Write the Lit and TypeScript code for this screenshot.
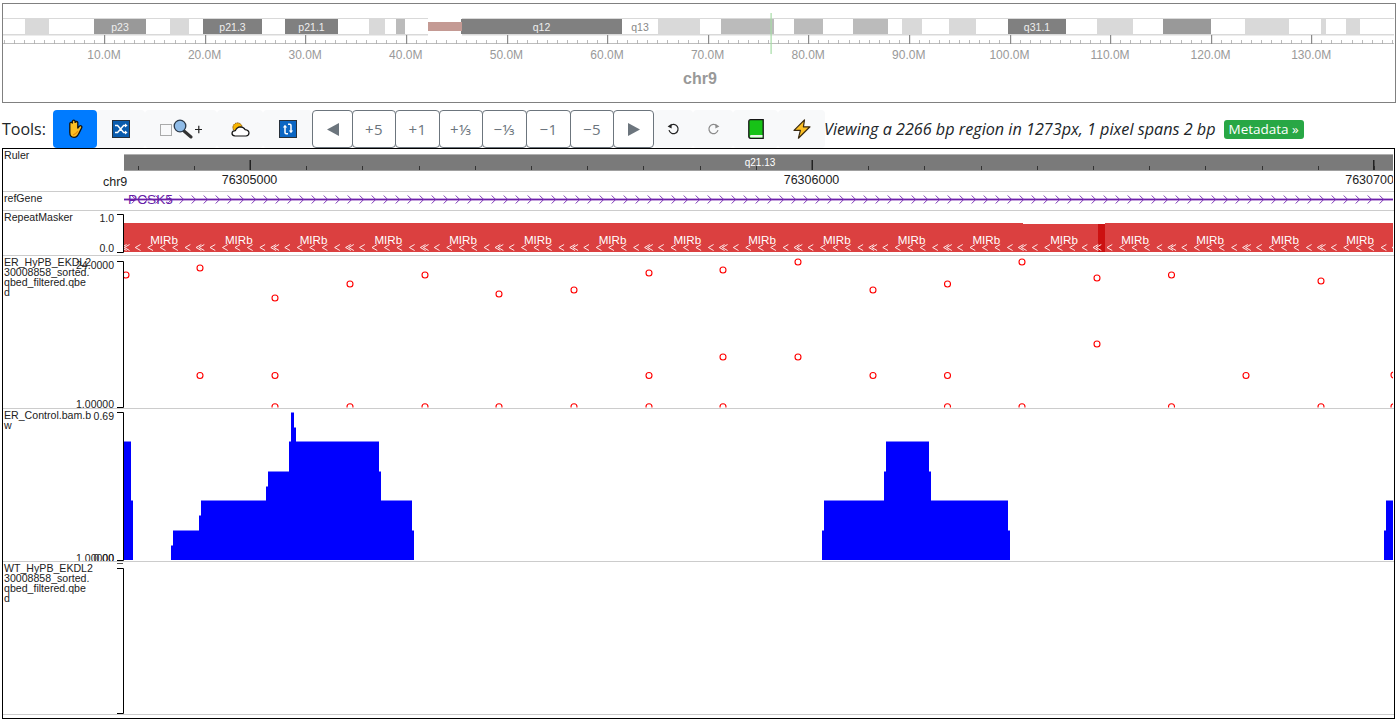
import { LitElement, html, svg, css, type TemplateResult } from "lit";
import { customElement } from "lit/decorators.js";

const LIGHT = "#d9d9d9";
const MID = "#bbbbbb";
const DARK = "#999999";
const DARKER = "#808080";

// Cytobands of chr9: [start px, end px, fill, label, label colour]
const BANDS: [number, number, string, string?, string?][] = [
  [25, 49, LIGHT],
  [94, 146, DARK, "p23"],
  [170, 189, LIGHT],
  [203, 262, DARKER, "p21.3"],
  [285, 338, DARKER, "p21.1"],
  [369, 385, LIGHT],
  [396, 405, MID],
  [461, 622, DARKER, "q12"],
  [622, 658, "#ffffff", "q13", "#888888"],
  [658, 700, LIGHT],
  [721, 774, MID],
  [794, 823, MID],
  [853, 888, MID],
  [902, 922, LIGHT],
  [949, 976, LIGHT],
  [1008, 1066, DARKER, "q31.1"],
  [1097, 1133, LIGHT],
  [1163, 1211, DARK],
  [1245, 1289, LIGHT],
  [1321, 1326, LIGHT],
  [1346, 1360, LIGHT],
];

const MIRB_X = [
  164, 238.75, 313.5, 388.25, 463, 537.75, 612.5, 687.25, 762, 836.75, 911.5,
  986.25, 1064, 1135, 1210, 1285, 1360,
];

const POINTS: [number, number][] = [
  [126, 275], [200, 268], [275, 298], [350, 284], [425, 275], [499, 294],
  [574, 290], [649, 273], [723, 270], [798, 262], [873, 290], [947.5, 284],
  [1022, 262], [1097, 278], [1171.5, 275], [1321, 281],
  [723, 357], [798, 357], [1097, 344],
  [200, 375.5], [275, 375.5], [649, 375.5], [873, 375.5], [947.5, 375.5], [1246, 375.5], [1394, 375],
  [275, 406.8], [350, 406.8], [425, 406.8], [499, 406.8], [574, 406.8], [649, 406.8],
  [723, 406.8], [947.5, 406.8], [1022, 406.8], [1171.5, 406.8], [1321, 406.8], [1394, 406.8],
];

// Coverage steps of the bigwig track: [x0, x1, top y], baseline is y=560.
const COVERAGE: [number, number, number][] = [
  [124, 131, 441], [131, 133, 500],
  [171, 173, 545], [173, 199, 530], [199, 201, 515], [201, 266, 500],
  [266, 268, 486], [268, 289, 471], [289, 291, 441], [291, 294, 412],
  [294, 296, 427], [296, 379, 441], [379, 381, 471], [381, 412, 500], [412, 414, 530],
  [822, 824, 530], [824, 884, 500], [884, 886, 471], [886, 929, 441],
  [929, 931, 471], [931, 1008, 500], [1008, 1010, 530],
  [1384, 1386, 530], [1386, 1393, 500],
];

const range = (n: number) => Array.from({ length: n }, (_, i) => i);

/** Canvas part of a track: clips drawing to the x range of the genome view. */
const view = (y: number, h: number, body: unknown) =>
  svg`<svg x="124" y=${y} width="1269" height=${h} viewBox="124 ${y} 1269 ${h}">${body}</svg>`;

/** Y axis bracket with the tick marks pointing left. */
const bracket = (y0: number, y1: number) =>
  svg`<path d="M117 ${y0 + 0.5}H123.5V${y1 + 0.5}H117" fill="none" stroke="#000" stroke-width="1" />`;

const axisLabel = (y: number, text: string) =>
  svg`<text class="axis" x="114" y=${y} text-anchor="end" dominant-baseline="central">${text}</text>`;

/** "<" mark used for the strand of a repeat element. */
const chevron = (x: number) => `M${x + 2.8} 244.5L${x - 2.4} 247.5L${x + 2.8} 250.5`;

const ICONS: Record<string, TemplateResult> = {
  hand: html`<svg width="17" height="20" viewBox="0 0 17 20">
    <path d="M2.8 10V4.6a1.3 1.3 0 0 1 2.5-.5V2.6a1.4 1.4 0 0 1 2.8 0V3.4a1.4 1.4 0 0 1 2.7.3V9l1.7-1.9a1.4 1.4 0 0 1 2.2 1.7L11.8 14.6Q10.2 18.4 7 18.4 2.8 18.4 2.8 13.4Z"
      fill="#fbbf24" stroke="#111" stroke-width="1.3" stroke-linejoin="round" />
    <path d="M11 12Q9 15 6 16" fill="none" stroke="#e8890c" stroke-width="1.2" />
  </svg>`,
  shuffle: html`<svg width="18" height="18" viewBox="0 0 18 18">
    <rect x=".5" y=".5" width="17" height="17" fill="#0b5cad" stroke="#27303a" />
    <path d="M3 5.5h2.6l6 7H14M3 12.5h2.6l6-7H14" fill="none" stroke="#fff" stroke-width="1.4" />
    <path d="M13 3.4l2.6 2.1-2.6 2.1zM13 10.4l2.6 2.1-2.6 2.1z" fill="#fff" />
  </svg>`,
  zoom: html`<svg width="42" height="20" viewBox="0 0 42 20">
    <rect x=".5" y="5.5" width="11" height="11" fill="none" stroke="#5a5a5a" stroke-dasharray="1 1" />
    <path d="M24 12l7 6" stroke="#333" stroke-width="3" stroke-linecap="round" />
    <circle cx="20" cy="7" r="5.8" fill="#8fbce8" stroke="#2b3a4a" stroke-width="1.3" />
    <path d="M35 10.5h7.5M38.8 6.8v7.5" stroke="#222" stroke-width="1.2" fill="none" />
  </svg>`,
  weather: html`<svg width="19" height="15" viewBox="0 0 19 15">
    <circle cx="6.5" cy="5.5" r="4.6" fill="#f7b500" stroke="#8a5200" stroke-width="1" stroke-dasharray="1.6 .7" />
    <path d="M4 14Q.8 13.6 1 11 1.3 8.6 4.4 8.6 5.6 5 9.5 4.8 12.8 5 14 7.6 18 8 18 11 17.8 13.8 15 14Z"
      fill="#fff" stroke="#111" stroke-width="1.2" stroke-linejoin="round" />
  </svg>`,
  loop: html`<svg width="18" height="18" viewBox="0 0 18 18">
    <rect x=".5" y=".5" width="17" height="17" fill="#0b66c3" stroke="#27303a" />
    <path d="M6 7v5.5q0 1.2 1.2 1.2H9M12 11V5.5q0-1.2-1.2-1.2H9" fill="none" stroke="#fff" stroke-width="1.5" />
    <path d="M3.8 7.6L6 4.8l2.2 2.8zM9.8 10.4l2.2 2.8 2.2-2.8z" fill="#fff" />
  </svg>`,
  left: html`<svg width="12" height="13" viewBox="0 0 12 13"><path d="M12 0V13L0 6.5Z" fill="#6c757d" /></svg>`,
  right: html`<svg width="12" height="13" viewBox="0 0 12 13"><path d="M0 0V13L12 6.5Z" fill="#6c757d" /></svg>`,
  undo: html`<svg width="13" height="13" viewBox="0 0 13 13">
    <path d="M3.2 2.8A4.6 4.6 0 1 1 2 7.2" fill="none" stroke="#222" stroke-width="1.2" />
    <path d="M.6 3.6L4.6.8v4.6z" fill="#222" />
  </svg>`,
  redo: html`<svg width="13" height="13" viewBox="0 0 13 13">
    <path d="M9.8 2.8A4.6 4.6 0 1 0 11 7.2" fill="none" stroke="#8b8b8b" stroke-width="1.2" />
    <path d="M12.4 3.6L8.4.8v4.6z" fill="#8b8b8b" />
  </svg>`,
  book: html`<svg width="16" height="20" viewBox="0 0 16 20">
    <path d="M2.6.7H15.2V19.3H2.6Q.8 19.3.8 17.5V2.5Q.8.7 2.6.7Z" fill="#17c317" stroke="#151515" stroke-width="1.3" />
    <path d="M2.5 16H14.5V18.5H2.5Q1.4 17.2 2.5 16Z" fill="#ecf5ea" />
  </svg>`,
  bolt: html`<svg width="18" height="20" viewBox="0 0 18 20">
    <path d="M11.5.8L1 11.4H7.4L5.4 19.2 17 7.8H10.4Z" fill="#fbbf24" stroke="#3a2a10" stroke-width="1.2" stroke-linejoin="round" />
  </svg>`,
};

const STEPS: [string, number][] = [
  ["+5", 44], ["+1", 45], ["+⅓", 44], ["−⅓", 45], ["−1", 45], ["−5", 44],
];

const ER_LABEL = ["ER_HyPB_EKDL2", "30008858_sorted.", "qbed_filtered.qbe", "d"];
const WT_LABEL = ["WT_HyPB_EKDL2", "30008858_sorted.", "qbed_filtered.qbe", "d"];
const BW_LABEL = ["ER_Control.bam.b", "w"];

const name = (lines: string[]) =>
  html`<div class="name">${lines.map((l) => html`<div>${l}</div>`)}</div>`;

@customElement("app-root")
export class AppRoot extends LitElement {
  static styles = css`
    :host {
      display: block;
      width: 1399px;
      height: 722px;
      overflow: hidden;
      background: #fff;
      color: #212529;
      font-family: "Liberation Sans", Arial, sans-serif;
    }
    svg {
      display: block;
    }
    text {
      font-family: "Liberation Sans", Arial, sans-serif;
    }
    .ideogram {
      box-sizing: border-box;
      width: 1394px;
      height: 100px;
      margin: 3px 0 0 2px;
      border: 1px solid #808080;
    }
    .band-label {
      font-size: 10.5px;
    }
    .pos {
      font-size: 12px;
      fill: #999;
    }
    .chrom {
      font-size: 16px;
      font-weight: 700;
      fill: #999;
    }
    .toolbar {
      display: flex;
      align-items: stretch;
      height: 38px;
      margin-top: 7px;
      font-family: "Open Sans", "Noto Sans", sans-serif;
    }
    .tools-label {
      width: 51px;
      padding-left: 2px;
      font-size: 16px;
      line-height: 38px;
    }
    .btn {
      display: flex;
      align-items: center;
      justify-content: center;
      box-sizing: border-box;
      border-radius: 4px;
      background: #f8f9fa;
    }
    .btn.active {
      background: #007bff;
    }
    .group {
      display: flex;
    }
    .step {
      background: #fff;
      border: 1px solid #6c757d;
      color: #6c757d;
      font-size: 15px;
      letter-spacing: 0.5px;
    }
    .step + .step {
      margin-left: -1px;
    }
    .status {
      margin-left: -1px;
      font-size: 16.2px;
      font-style: italic;
      line-height: 38px;
      white-space: nowrap;
    }
    .badge {
      align-self: center;
      margin-left: 8px;
      padding: 0 5px;
      border-radius: 3px;
      background: #28a745;
      color: #fff;
      font-size: 13.5px;
      line-height: 19px;
      white-space: nowrap;
    }
    .browser {
      box-sizing: border-box;
      width: 1393px;
      height: 571px;
      margin-left: 2px;
      border: 1px solid #000;
    }
    .track {
      display: grid;
      border-bottom: 1px solid #ccc;
    }
    .track > * {
      grid-area: 1 / 1;
    }
    .name {
      box-sizing: border-box;
      padding: 1px 0 0 1px;
      font-size: 10.6px;
      line-height: 10px;
      color: #222;
      white-space: nowrap;
    }
    .axis {
      font-size: 10.5px;
      fill: #222;
    }
    .tick-label {
      font-size: 12.5px;
      fill: #222;
    }
    .repeat {
      font-size: 11.6px;
      fill: #fff;
    }
  `;

  private _ideogram() {
    return html`<div class="ideogram">
      <svg width="1392" height="98" viewBox="3 4 1392 98">
        <rect x="3" y="18" width="425" height="1" fill=${LIGHT} />
        <rect x="3" y="34" width="425" height="1.5" fill=${LIGHT} />
        <rect x="462" y="18" width="932" height="1" fill=${LIGHT} />
        <rect x="462" y="34" width="932" height="1.5" fill=${LIGHT} />
        ${BANDS.map(
          ([a, b, fill, label, color]) => svg`
            <rect x=${a} y="19" width=${b - a} height="15" fill=${fill} />
            ${label
              ? svg`<text class="band-label" x=${(a + b) / 2} y="27" text-anchor="middle"
                  dominant-baseline="central" fill=${color ?? "#eeeeee"}>${label}</text>`
              : ""}`
        )}
        <rect x="428" y="22" width="34" height="9" fill="#c49a94" />
        <rect x="3" y="43" width="1391" height="1" fill="#bdbdbd" />
        ${range(139).map((i) => {
          const x = Math.round(3.5 + i * 10.06);
          const major = i % 10 === 0 && i > 0;
          return svg`<rect x=${x} y=${major ? 35 : 40} width=${major ? 1.2 : 0.8}
            height=${major ? 9 : 4} fill=${major ? "#8a8a8a" : "#aaaaaa"} />`;
        })}
        ${range(13).map(
          (i) => svg`<text class="pos" x=${104 + i * 100.6} y="55" text-anchor="middle"
            dominant-baseline="central">${(i + 1) * 10}.0M</text>`
        )}
        <rect x="770.5" y="13" width="1.2" height="41" fill="#a6dca6" />
        <text class="chrom" x="700" y="78" text-anchor="middle" dominant-baseline="central">chr9</text>
      </svg>
    </div>`;
  }

  private _toolbar() {
    const light = (w: number, icon: string) =>
      html`<div class="btn" style="width:${w}px">${ICONS[icon]}</div>`;
    return html`<div class="toolbar">
      <div class="tools-label">Tools:</div>
      <div class="btn active" style="width:44px">${ICONS.hand}</div>
      ${light(48, "shuffle")} ${light(72, "zoom")} ${light(46, "weather")} ${light(49, "loop")}
      <div class="group">
        <div class="btn step" style="width:41px">${ICONS.left}</div>
        ${STEPS.map(
          ([t, w]) => html`<div class="btn step" style="width:${w}px">${t}</div>`
        )}
        <div class="btn step" style="width:41px">${ICONS.right}</div>
      </div>
      ${light(39, "undo")} ${light(40, "redo")} ${light(45, "book")} ${light(47, "bolt")}
      <div class="status">Viewing a 2266 bp region in 1273px, 1 pixel spans 2 bp</div>
      <div class="badge">Metadata »</div>
    </div>`;
  }

  private _ruler() {
    const majors = [249.5, 811.5, 1373];
    return html`<div class="track">
      <svg width="1391" height="42" viewBox="3 149 1391 42">
        ${view(149, 42, svg`
          <rect x="124" y="154" width="1269" height="17" fill="#7a7a7a" />
          <rect x="124" y="154" width="1269" height="1" fill="#b0b0b0" />
          <rect x="124" y="170" width="1269" height="1" fill="#a0a0a0" />
          ${range(24).map((i) => svg`<rect x=${Math.round(137.5 + i * 56.2)} y="166" width="1" height="4" fill="#333" />`)}
          ${majors.map((x) => svg`<rect x=${x} y="160" width="1.5" height="10" fill="#222" />`)}
          <text x="760" y="162" font-size="10" fill="#fff" text-anchor="middle" dominant-baseline="central">q21.13</text>
          ${majors.map((x, i) => svg`<text class="tick-label" x=${x} y="180" text-anchor="middle"
            dominant-baseline="central">${76305000 + i * 1000}</text>`)}
        `)}
        <text class="tick-label" x="103" y="181.5" font-size="12" dominant-baseline="central">chr9</text>
      </svg>
      ${name(["Ruler"])}
    </div>`;
  }

  private _refGene() {
    return html`<div class="track">
      <svg width="1391" height="18" viewBox="3 192 1391 18">
        ${view(192, 18, svg`
          <rect x="124" y="198" width="1269" height="3" fill="#c5a3dd" />
          <rect x="124" y="199" width="1269" height="1" fill="#6a1fa8" />
          ${range(105).map((i) => {
            const x = 134.7 + i * 12;
            return svg`<path d="M${x - 3} 195.5L${x + 1} 199.5L${x - 3} 203.5" fill="none" stroke="#7b35b5" stroke-width="1" />`;
          })}
          <text x="128" y="199.5" font-size="13.7" fill="#6a1fa8" dominant-baseline="central">PCSK5</text>
        `)}
      </svg>
      ${name(["refGene"])}
    </div>`;
  }

  private _repeatMasker() {
    const chevrons: string[] = [];
    for (let k = -1; k < 17; k++) {
      const base = 200 + k * 74.75;
      chevrons.push(chevron(base - 1.5), chevron(base + 1.5));
      for (let j = 1; j < 6; j++) chevrons.push(chevron(base + j * 12.46));
    }
    return html`<div class="track">
      <svg width="1391" height="44" viewBox="3 211 1391 44">
        ${bracket(214, 252)} ${axisLabel(218, "1.0")} ${axisLabel(248, "0.0")}
        ${view(211, 44, svg`
          <rect x="124" y="223" width="1269" height="29" fill="#db4040" />
          <rect x="1023" y="223" width="82" height="1" fill="#fff" />
          <rect x="1098" y="224" width="7" height="28" fill="#cc1111" />
          <path d=${chevrons.join("")} fill="none" stroke="#fff" stroke-opacity="0.9" stroke-width="1" />
          ${MIRB_X.map((x) => svg`<text class="repeat" x=${x} y="239" text-anchor="middle" dominant-baseline="central">MIRb</text>`)}
        `)}
      </svg>
      ${name(["RepeatMasker"])}
    </div>`;
  }

  private _scatter() {
    return html`<div class="track">
      <svg width="1391" height="152" viewBox="3 256 1391 152">
        ${bracket(261, 407)} ${axisLabel(265, "24.0000")} ${axisLabel(404, "1.00000")}
        ${view(256, 151.5, POINTS.map(
          ([x, y]) => svg`<circle cx=${x} cy=${y} r="3" fill="none" stroke="#f00" stroke-width="1.1" />`
        ))}
      </svg>
      ${name(ER_LABEL)}
    </div>`;
  }

  private _coverage() {
    return html`<div class="track">
      <svg width="1391" height="152" viewBox="3 409 1391 152">
        ${bracket(412, 560)} ${axisLabel(415.5, "0.69")}
        ${axisLabel(558, "1.00000")} ${axisLabel(557.5, "0.00")}
        ${view(409, 152, COVERAGE.map(([a, b, top]) => svg`
          <rect x=${a} y=${top} width=${b - a} height="1" fill="#8080ff" />
          <rect x=${a} y=${top + 1} width=${b - a} height=${560 - top - 1} fill="#00f" />`
        ))}
      </svg>
      ${name(BW_LABEL)}
    </div>`;
  }

  private _empty() {
    return html`<div class="track">
      <svg width="1391" height="152" viewBox="3 562 1391 152">
        <rect x="117" y="563" width="6" height="1" fill="#555" />
        ${bracket(568, 713)}
      </svg>
      ${name(WT_LABEL)}
    </div>`;
  }

  render() {
    return html`
      ${this._ideogram()} ${this._toolbar()}
      <div class="browser">
        ${this._ruler()} ${this._refGene()} ${this._repeatMasker()}
        ${this._scatter()} ${this._coverage()} ${this._empty()}
      </div>
    `;
  }
}
